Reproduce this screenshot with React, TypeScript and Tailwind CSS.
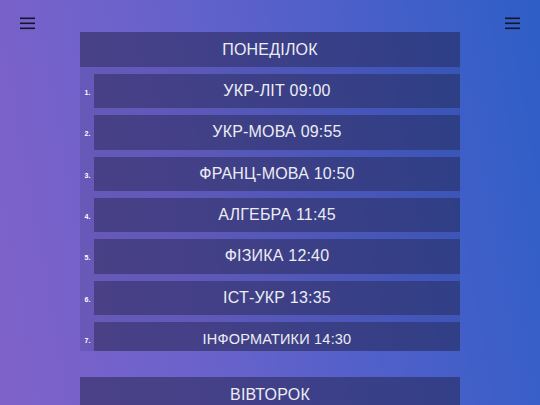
import React from "react";

const lessons = [
  "УКР-ЛІТ 09:00",
  "УКР-МОВА 09:55",
  "ФРАНЦ-МОВА 10:50",
  "АЛГЕБРА 11:45",
  "ФІЗИКА 12:40",
  "ІСТ-УКР 13:35",
  "ІНФОРМАТИКИ 14:30",
];

function Burger() {
  return (
    <svg width="15" height="13" viewBox="0 0 15 13" className="block">
      <rect x="0" y="0.5" width="15" height="1.6" fill="#14142e" />
      <rect x="0" y="5.5" width="15" height="1.6" fill="#14142e" />
      <rect x="0" y="10.5" width="15" height="1.6" fill="#14142e" />
    </svg>
  );
}

export default function App() {
  return (
    <div
      className="w-full h-[405px] overflow-hidden bg-[linear-gradient(80deg,#7f61c9_0%,#6a62cb_35%,#4a5fc9_70%,#2d5fc6_100%)] text-[#ececf4]"
      style={{ fontFamily: '"Liberation Sans", Arial, sans-serif' }}
    >
      <div className="flex justify-between px-[20px] pt-[17px] h-[32px]">
        <Burger />
        <Burger />
      </div>
      <div className="mx-auto w-[380px]">
        <div className="h-[35px] flex items-center justify-center bg-[rgba(32,32,70,0.5)] text-[16px] tracking-[0.2px]">
          ПОНЕДІЛОК
        </div>
        <div className="h-[284px] overflow-hidden bg-[rgba(32,32,70,0.13)] pt-[7px] flex flex-col gap-[7px]">
          {lessons.map((l, i) => (
            <div key={i} className="flex shrink-0 h-[34.33px]">
              <div className="w-[14px] flex items-center justify-center pl-[1px] pt-[4px] text-[7px] font-bold text-white">
                {i + 1}.
              </div>
              <div
                className={
                  "flex-1 flex items-center justify-center bg-[rgba(32,32,70,0.43)] tracking-[0.2px] " +
                  (i === 6 ? "text-[14.5px] items-start pt-[7px]" : "text-[16px]")
                }
              >
                {l}
              </div>
            </div>
          ))}
        </div>
        <div className="mt-[26px] h-[35px] flex items-center justify-center bg-[rgba(32,32,70,0.5)] text-[16px] tracking-[0.2px]">
          ВІВТОРОК
        </div>
      </div>
    </div>
  );
}
